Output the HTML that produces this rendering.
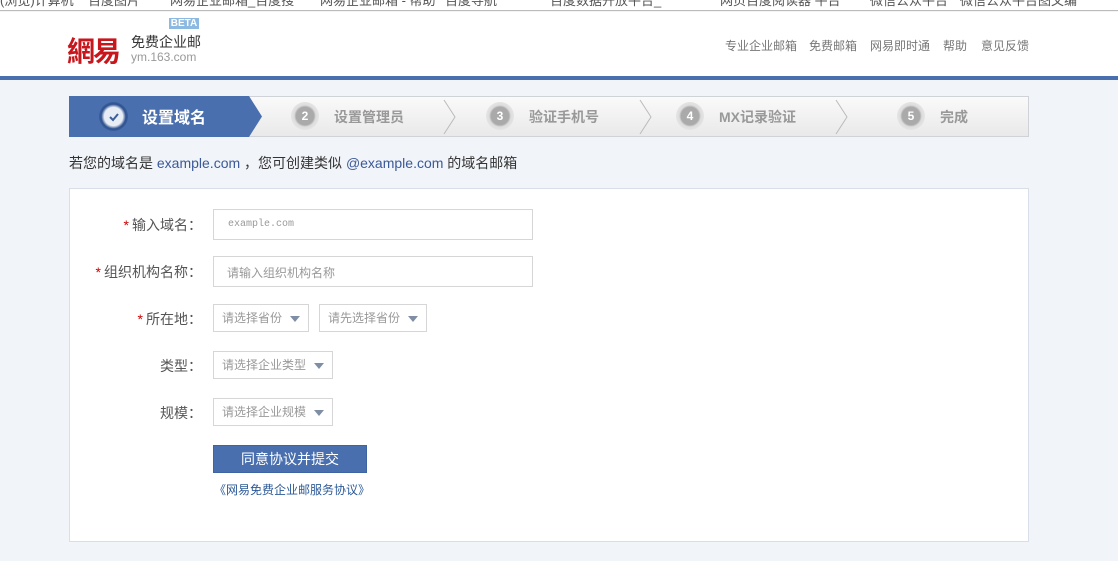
<!DOCTYPE html>
<html><head><meta charset="utf-8"><style>
*{margin:0;padding:0;box-sizing:border-box}
body{width:1118px;height:561px;overflow:hidden;background:#f1f4f9;font-family:"Liberation Sans","Noto Sans CJK SC",sans-serif;font-size:14px;color:#333;position:relative}
.abs{position:absolute}
#bm{left:0;top:0;width:1118px;height:11px;background:#fff;border-bottom:1px solid #bbb;overflow:hidden}
#bm span{position:absolute;top:-10px;font-size:13px;color:#555;white-space:nowrap}
#hd{left:0;top:12px;width:1118px;height:64px;background:#fff}
#bar{left:0;top:76px;width:1118px;height:4px;background:#4a6fae}
.nav{font-size:12px;color:#777}
#steps{left:69px;top:96px;width:960px;height:41px;border:1px solid #cfd3d8;background:linear-gradient(#fafafa,#e9e9e9)}
.circ{width:28px;height:28px;border-radius:50%;background:radial-gradient(#aaa 45%,#ddd 55%,#f2f2f2 100%);color:#fff;font-weight:bold;font-size:12px;text-align:center;line-height:28px;top:5px}
.st{top:10px;font-size:14px;font-weight:bold;color:#999}
.chev{top:2px}
.lbl{font-size:14px;color:#555;text-align:right;width:140px;left:62px}
.lbl b{color:#c00;font-weight:normal;margin-right:3px}
.inp{border:1px solid #d6d6d6;background:#fff;height:31px;left:213px}
.sel{border:1px solid #d6d6d6;background:#fff;height:28px;font-size:12px;color:#999;line-height:26px;padding-left:8px}
.sel i{position:absolute;right:8px;top:11px;border-left:5px solid transparent;border-right:5px solid transparent;border-top:6px solid #7f8ea5}
</style></head><body>
<div id="bm" class="abs"><span style="left:0">(浏览)计算机</span><span style="left:88px">百度图片</span><span style="left:170px">网易企业邮箱_百度搜</span><span style="left:320px">网易企业邮箱 - 帮助</span><span style="left:445px">百度导航</span><span style="left:550px">百度数据开放平台_</span><span style="left:720px">网页百度阅读器 平台</span><span style="left:870px">微信公众平台</span><span style="left:960px">微信公众平台图文编</span></div>
<div id="hd" class="abs">
 <div class="abs" style="left:67px;top:18px;font-size:28px;font-weight:bold;color:#c8161d;letter-spacing:-2px">網易</div>
 <div class="abs" style="left:131px;top:20px;font-size:14px;color:#333">免费企业邮</div>
 <div class="abs" style="left:131px;top:38px;font-size:12px;color:#999">ym.163.com</div>
 <div class="abs" style="left:169px;top:6px;width:30px;height:11px;background:#8bb9e1;color:#fff;font-size:10px;line-height:11px;text-align:center;font-weight:bold">BETA</div>
 <div class="abs nav" style="left:725px;top:25px">专业企业邮箱</div>
 <div class="abs nav" style="left:809px;top:25px">免费邮箱</div>
 <div class="abs nav" style="left:870px;top:25px">网易即时通</div>
 <div class="abs nav" style="left:943px;top:25px">帮助</div>
 <div class="abs nav" style="left:981px;top:25px">意见反馈</div>
</div>
<div id="bar" class="abs"></div>
<div id="steps" class="abs">
 <svg class="abs" style="left:-1px;top:-1px" width="195" height="41"><polygon points="0,0 180,0 193,20.5 180,41 0,41" fill="#4a6fae"/></svg>
 <div class="abs" style="left:29px;top:5px;width:29px;height:29px;border-radius:50%;background:radial-gradient(#e8edf5 45%,#2e5290 60%,#5b7fbd 100%)"></div>
 <svg class="abs" style="left:37px;top:13px" width="14" height="14"><path d="M3 7l3 3 5-6" stroke="#3b5e9c" stroke-width="2" fill="none"/></svg>
 <div class="abs" style="left:72px;top:7px;font-size:16px;font-weight:bold;color:#fff">设置域名</div>
 <div class="abs circ" style="left:221px">2</div><div class="abs st" style="left:264px">设置管理员</div>
 <svg class="abs chev" style="left:373px" width="14" height="36"><path d="M1 1l11 17-11 17" stroke="#bbb" fill="none"/></svg>
 <div class="abs circ" style="left:416px">3</div><div class="abs st" style="left:459px">验证手机号</div>
 <svg class="abs chev" style="left:569px" width="14" height="36"><path d="M1 1l11 17-11 17" stroke="#bbb" fill="none"/></svg>
 <div class="abs circ" style="left:606px">4</div><div class="abs st" style="left:649px">MX记录验证</div>
 <svg class="abs chev" style="left:765px" width="14" height="36"><path d="M1 1l11 17-11 17" stroke="#bbb" fill="none"/></svg>
 <div class="abs circ" style="left:827px">5</div><div class="abs st" style="left:870px">完成</div>
</div>
<div class="abs" style="left:69px;top:153px;font-size:14px;color:#333">若您的域名是 <span style="color:#3b5998">example.com</span> ，您可创建类似 <span style="color:#3b5998">@example.com</span> 的域名邮箱</div>
<div class="abs" style="left:69px;top:188px;width:960px;height:354px;background:#fff;border:1px solid #d9dee8"></div>
<div class="abs lbl" style="top:215px"><b>*</b>输入域名：</div>
<div class="abs inp" style="top:209px;width:320px;font-family:'Liberation Mono',monospace;font-size:10px;color:#999;padding:9px 0 0 14px">example.com</div>
<div class="abs lbl" style="top:262px"><b>*</b>组织机构名称：</div>
<div class="abs inp" style="top:256px;width:320px;font-size:12px;color:#999;padding:7px 0 0 13px">请输入组织机构名称</div>
<div class="abs lbl" style="top:309px"><b>*</b>所在地：</div>
<div class="abs sel" style="left:213px;top:304px;width:96px">请选择省份<i></i></div>
<div class="abs sel" style="left:319px;top:304px;width:108px">请先选择省份<i></i></div>
<div class="abs lbl" style="top:356px">类型：</div>
<div class="abs sel" style="left:213px;top:351px;width:120px">请选择企业类型<i></i></div>
<div class="abs lbl" style="top:403px">规模：</div>
<div class="abs sel" style="left:213px;top:398px;width:120px">请选择企业规模<i></i></div>
<div class="abs" style="left:213px;top:445px;width:154px;height:28px;background:#4a6fae;border:1px solid #3f64a3;color:#fff;font-size:14px;text-align:center;line-height:26px">同意协议并提交</div>
<div class="abs" style="left:214px;top:481px;font-size:12px;color:#2c5a98">《网易免费企业邮服务协议》</div>
</body></html>
